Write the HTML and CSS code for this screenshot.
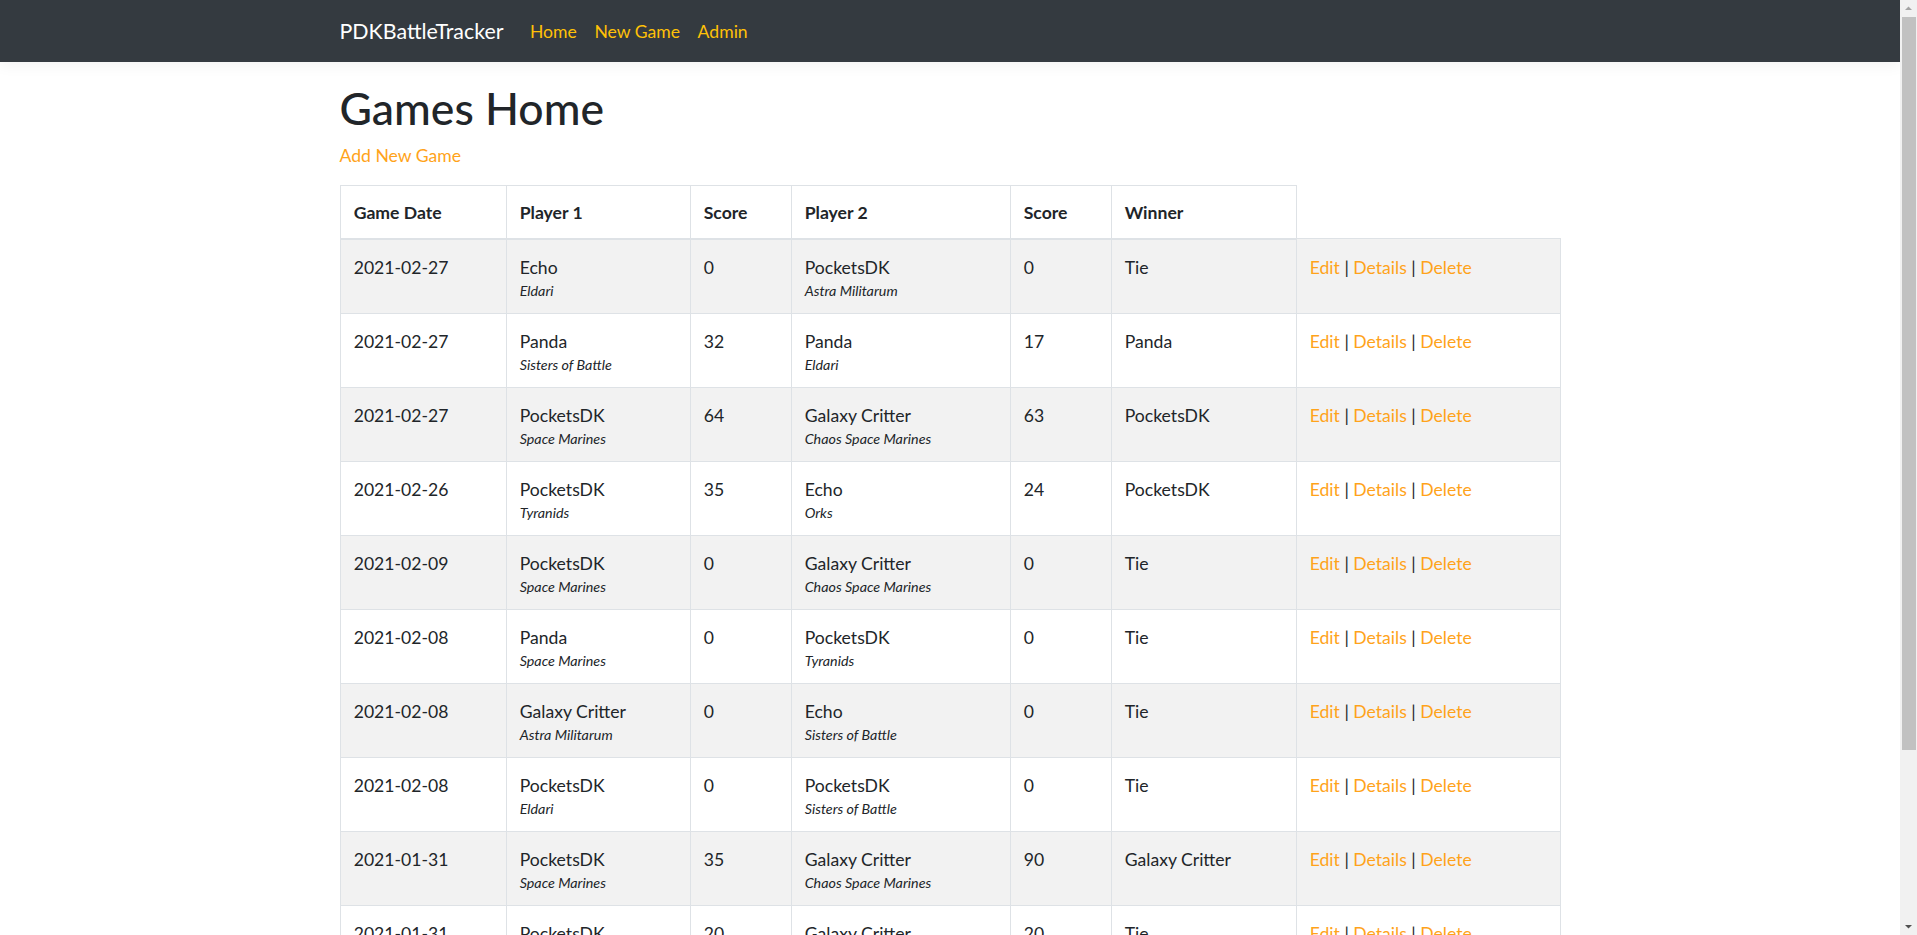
FILE: index.html
```html
<!DOCTYPE html>
<html lang="en">
<head>
<meta charset="utf-8">
<title>Games Home - PDKBattleTracker</title>
<link rel="stylesheet" href="styles.css">
</head>
<body>
<div class="page">
<header>
  <nav class="navbar">
    <div class="container nav-inner">
      <a class="brand" href="#">PDKBattleTracker</a>
      <ul class="nav-list">
        <li><a class="nav-link" href="#">Home</a></li>
        <li><a class="nav-link" href="#">New Game</a></li>
        <li><a class="nav-link" href="#">Admin</a></li>
      </ul>
    </div>
  </nav>
</header>
<div class="container">
  <main class="main">
    <h1 class="title">Games Home</h1>
    <p class="add"><a href="#">Add New Game</a></p>
    <table class="games">
      <colgroup>
        <col class="c-date">
        <col class="c-p1">
        <col class="c-s1">
        <col class="c-p2">
        <col class="c-s2">
        <col class="c-win">
        <col class="c-act">
      </colgroup>
      <thead>
        <tr>
          <th>Game Date</th>
          <th>Player 1</th>
          <th>Score</th>
          <th>Player 2</th>
          <th>Score</th>
          <th>Winner</th>
        </tr>
      </thead>
      <tbody>
        <tr>
          <td>2021-02-27</td>
          <td>Echo<span class="faction">Eldari</span></td>
          <td>0</td>
          <td>PocketsDK<span class="faction">Astra Militarum</span></td>
          <td>0</td>
          <td>Tie</td>
          <td><a href="#">Edit</a> | <a href="#">Details</a> | <a href="#">Delete</a></td>
        </tr>
        <tr>
          <td>2021-02-27</td>
          <td>Panda<span class="faction">Sisters of Battle</span></td>
          <td>32</td>
          <td>Panda<span class="faction">Eldari</span></td>
          <td>17</td>
          <td>Panda</td>
          <td><a href="#">Edit</a> | <a href="#">Details</a> | <a href="#">Delete</a></td>
        </tr>
        <tr>
          <td>2021-02-27</td>
          <td>PocketsDK<span class="faction">Space Marines</span></td>
          <td>64</td>
          <td>Galaxy Critter<span class="faction">Chaos Space Marines</span></td>
          <td>63</td>
          <td>PocketsDK</td>
          <td><a href="#">Edit</a> | <a href="#">Details</a> | <a href="#">Delete</a></td>
        </tr>
        <tr>
          <td>2021-02-26</td>
          <td>PocketsDK<span class="faction">Tyranids</span></td>
          <td>35</td>
          <td>Echo<span class="faction">Orks</span></td>
          <td>24</td>
          <td>PocketsDK</td>
          <td><a href="#">Edit</a> | <a href="#">Details</a> | <a href="#">Delete</a></td>
        </tr>
        <tr>
          <td>2021-02-09</td>
          <td>PocketsDK<span class="faction">Space Marines</span></td>
          <td>0</td>
          <td>Galaxy Critter<span class="faction">Chaos Space Marines</span></td>
          <td>0</td>
          <td>Tie</td>
          <td><a href="#">Edit</a> | <a href="#">Details</a> | <a href="#">Delete</a></td>
        </tr>
        <tr>
          <td>2021-02-08</td>
          <td>Panda<span class="faction">Space Marines</span></td>
          <td>0</td>
          <td>PocketsDK<span class="faction">Tyranids</span></td>
          <td>0</td>
          <td>Tie</td>
          <td><a href="#">Edit</a> | <a href="#">Details</a> | <a href="#">Delete</a></td>
        </tr>
        <tr>
          <td>2021-02-08</td>
          <td>Galaxy Critter<span class="faction">Astra Militarum</span></td>
          <td>0</td>
          <td>Echo<span class="faction">Sisters of Battle</span></td>
          <td>0</td>
          <td>Tie</td>
          <td><a href="#">Edit</a> | <a href="#">Details</a> | <a href="#">Delete</a></td>
        </tr>
        <tr>
          <td>2021-02-08</td>
          <td>PocketsDK<span class="faction">Eldari</span></td>
          <td>0</td>
          <td>PocketsDK<span class="faction">Sisters of Battle</span></td>
          <td>0</td>
          <td>Tie</td>
          <td><a href="#">Edit</a> | <a href="#">Details</a> | <a href="#">Delete</a></td>
        </tr>
        <tr>
          <td>2021-01-31</td>
          <td>PocketsDK<span class="faction">Space Marines</span></td>
          <td>35</td>
          <td>Galaxy Critter<span class="faction">Chaos Space Marines</span></td>
          <td>90</td>
          <td>Galaxy Critter</td>
          <td><a href="#">Edit</a> | <a href="#">Details</a> | <a href="#">Delete</a></td>
        </tr>
        <tr>
          <td>2021-01-31</td>
          <td>PocketsDK<span class="faction">Space Marines</span></td>
          <td>20</td>
          <td>Galaxy Critter<span class="faction">Chaos Space Marines</span></td>
          <td>20</td>
          <td>Tie</td>
          <td><a href="#">Edit</a> | <a href="#">Details</a> | <a href="#">Delete</a></td>
        </tr>
        <tr>
          <td>2021-01-30</td>
          <td>Echo<span class="faction">Orks</span></td>
          <td>45</td>
          <td>Panda<span class="faction">Sisters of Battle</span></td>
          <td>52</td>
          <td>Panda</td>
          <td><a href="#">Edit</a> | <a href="#">Details</a> | <a href="#">Delete</a></td>
        </tr>
      </tbody>
    </table>
  </main>
</div>
<footer class="footer">
  <div class="container">&copy; 2021 - PDKBattleTracker - <a href="#">Privacy</a></div>
</footer>
</div>
<div class="scrollbar" aria-hidden="true">
  <div class="sb-btn">
    <svg width="17" height="17" viewBox="0 0 17 17"><path d="M5 10 L8.5 6.5 L12 10 Z" fill="#a3a3a3"/></svg>
  </div>
  <div class="sb-track"><div class="sb-thumb"></div></div>
  <div class="sb-btn">
    <svg width="17" height="17" viewBox="0 0 17 17"><path d="M5 7 L8.5 10.5 L12 7 Z" fill="#505050"/></svg>
  </div>
</div>
</body>
</html>
```

FILE: styles.css
```css
body {
  margin: 0;
  font-family: Lato, "Open Sans", "Liberation Sans", sans-serif;
  font-size: 17.6px;
  line-height: 1.5;
  color: #212529;
  background: #ffffff;
}

.page {
  margin-right: 17px;
}

a {
  color: #ffa31a;
  text-decoration: none;
}

.container {
  box-sizing: border-box;
  max-width: 1254px;
  margin: 0 auto;
  padding: 0 16.5px;
}

.navbar {
  background: #343a40;
  padding: 8.8px 0;
  margin-bottom: 17.6px;
  box-shadow: 0 4.4px 13.2px rgba(0, 0, 0, 0.05);
}

.nav-inner {
  display: flex;
  align-items: center;
}

.brand {
  color: #ffffff;
  font-size: 21.4px;
  line-height: 33px;
  padding: 6.5px 0 4.5px;
  margin-right: 17.6px;
}

.nav-list {
  display: flex;
  list-style: none;
  margin: 0;
  padding: 0;
}

.nav-link {
  display: block;
  padding: 9.8px 8.8px 7.8px;
  color: #ffc107;
}

.main {
  padding-top: 2.4px;
  padding-bottom: 17.6px;
}

.title {
  font-size: 44.5px;
  font-weight: 500;
  line-height: 52.8px;
  margin: 0 0 8.8px;
}

.add {
  margin: 0 0 15.2px;
}

.games {
  width: 100%;
  border-collapse: collapse;
  margin-bottom: 17.6px;
}

.c-date { width: 166px; }
.c-p1 { width: 184px; }
.c-s1 { width: 101px; }
.c-p2 { width: 219px; }
.c-s2 { width: 101px; }
.c-win { width: 185px; }
.c-act { width: 264px; }

.games th,
.games td {
  border: 1px solid #dee2e6;
  text-align: left;
  vertical-align: top;
  line-height: 26px;
}

.games th {
  padding: 14.2px 13.2px 11.8px;
  font-weight: 700;
  vertical-align: bottom;
  border-bottom-width: 2px;
}

.games td {
  padding: 15.5px 13.2px 12.5px;
}

.games tbody tr:nth-of-type(odd) {
  background: rgba(0, 0, 0, 0.05);
}

.faction {
  display: block;
  font-size: 14.3px;
  font-style: italic;
  line-height: 19px;
}

.footer {
  border-top: 1px solid #dee2e6;
  color: #6c757d;
  line-height: 60px;
  white-space: nowrap;
}

.scrollbar {
  position: fixed;
  top: 0;
  right: 0;
  width: 17px;
  height: 100vh;
  display: flex;
  flex-direction: column;
  background: #f1f1f1;
}

.sb-btn {
  height: 17px;
  flex: none;
}

.sb-btn svg {
  display: block;
}

.sb-track {
  flex: 1;
}

.sb-thumb {
  height: 733px;
  margin: 0 1px 0 2px;
  background: #c1c1c1;
}
```
